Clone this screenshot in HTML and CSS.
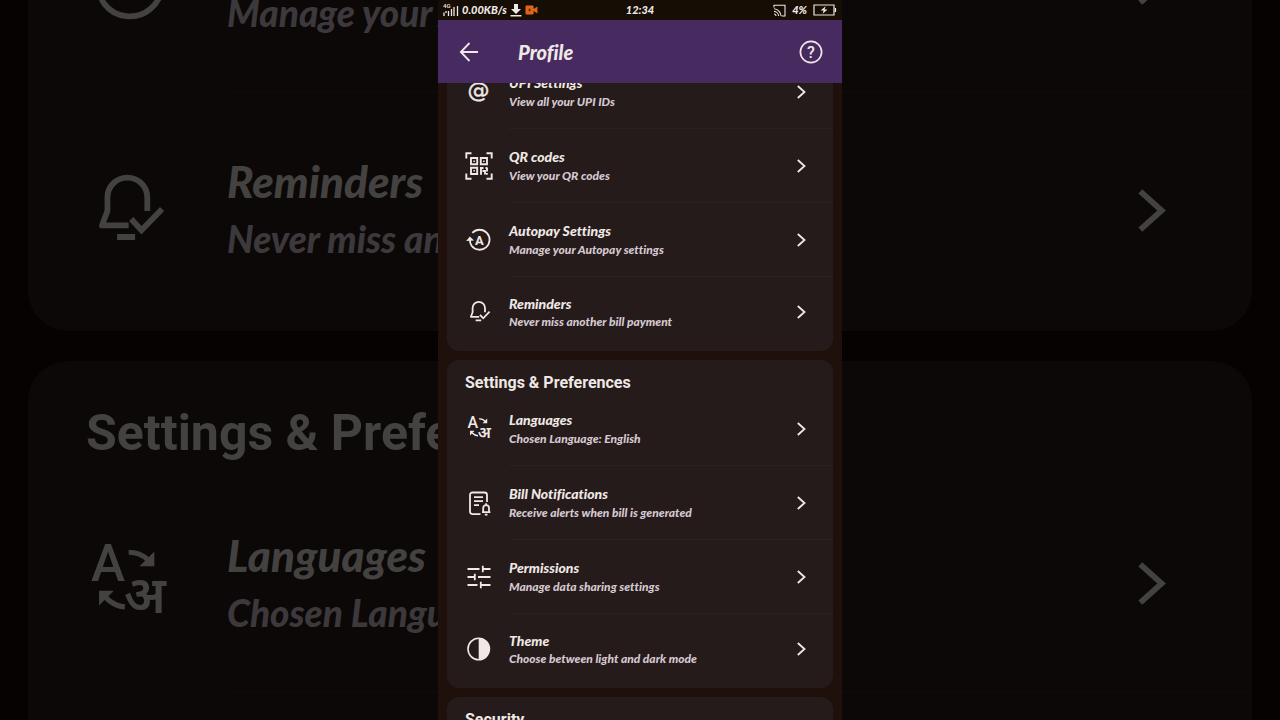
FILE: index.html
```html
<!DOCTYPE html>
<html lang="en">

<head>
    <meta charset="UTF-8">
    <meta name="viewport" content="width=device-width, initial-scale=1.0">
    <title>Profile</title>
    <link rel="stylesheet" href="styles.css">
</head>

<body>
    <!-- Icon set -->
    <svg class="icon-set" aria-hidden="true">
        <symbol id="icon-chevron" viewBox="0 0 16 16">
            <path d="M4.8 2 L11.5 8 L4.8 14" fill="none" stroke="currentColor" stroke-width="1.8" />
        </symbol>
        <symbol id="icon-at" viewBox="0 0 28 28">
            <text x="13.5" y="20" class="glyph glyph-at">@</text>
        </symbol>
        <symbol id="icon-qr" viewBox="0 0 28 28">
            <g fill="none" stroke="currentColor" stroke-width="1.9">
                <path d="M1.3 6.5V1.3H6.5M21.5 1.3H26.7V6.5M26.7 21.5V26.7H21.5M6.5 26.7H1.3V21.5" />
                <path d="M6 6H12.2V12.2H6ZM15.8 6H22V12.2H15.8ZM6 15.8H12.2V22H6Z" />
                <path d="M15 16H18.5M16 15.2V22.8M17.5 19H20V22.5M20.5 16H22.5M22 16V19.5" />
            </g>
            <path d="M8.4 8.4H9.9V9.9H8.4ZM18.1 8.4H19.6V9.9H18.1ZM8.4 18.1H9.9V19.6H8.4ZM21 21H22.8V22.8H21Z" fill="currentColor" />
        </symbol>
        <symbol id="icon-autopay" viewBox="0 0 28 28">
            <path d="M7.3 6.9A10 10 0 1 1 6.6 19.8Q4.9 17.4 4.8 13" fill="none" stroke="currentColor" stroke-width="1.8" />
            <path d="M1.2 15L4.8 10.4L9 14.6Z" fill="currentColor" />
            <text x="14.4" y="18.8" class="glyph glyph-auto">A</text>
        </symbol>
        <symbol id="icon-reminder" viewBox="0 0 28 28">
            <g fill="none" stroke="currentColor" stroke-width="1.8">
                <path d="M14.2 18.8H5.9L7.6 14.3V10.1A6 6 0 0 1 20 10.1V14.3" stroke-linejoin="round" />
                <path d="M15 16.8L18.2 20.3L24.6 13.7M10.6 22.4H16.2" />
            </g>
        </symbol>
        <symbol id="icon-language" viewBox="0 0 28 28">
            <text x="7.8" y="12.6" class="glyph glyph-latin">A</text>
            <text x="19.2" y="22.8" class="glyph glyph-hindi">अ</text>
            <path d="M14.2 3.8Q17.8 3.8 20.2 6.2M13 20.8Q9.8 20.6 7.2 18" fill="none" stroke="currentColor" stroke-width="1.6" />
            <path d="M22.2 3.6V8.2H17.6ZM5 20.4V15.8H9.6Z" fill="currentColor" />
        </symbol>
        <symbol id="icon-bill" viewBox="0 0 28 28">
            <g fill="none" stroke="currentColor" stroke-width="1.8">
                <path d="M15.5 25.2H7.5A2.5 2.5 0 0 1 5 22.7V6A2.5 2.5 0 0 1 7.5 3.5H19.5A2.5 2.5 0 0 1 22 6V13" />
                <path d="M9 8.2H18M9 12.2H18M9 16.2H14" />
                <path d="M17 23.2H25.4M18.2 23V19A2.9 2.9 0 0 1 24 19V23M21.1 16V14.3M19.8 25.6H22.5" />
            </g>
        </symbol>
        <symbol id="icon-sliders" viewBox="0 0 28 28">
            <path d="M2.5 6H14.5M17.5 6H25.5M17.8 2.8V9.2M2.5 14H10M13 14H25.5M9.8 10.8V17.2M2.5 22H12.5M15.5 22H25.5M15.8 18.8V25.2" fill="none" stroke="currentColor" stroke-width="1.8" />
        </symbol>
        <symbol id="icon-theme" viewBox="0 0 28 28">
            <circle cx="13.7" cy="14" r="10.7" fill="none" stroke="currentColor" stroke-width="1.6" />
            <path d="M13.7 3.3A10.7 10.7 0 0 1 13.7 24.7Z" fill="currentColor" />
        </symbol>
    </svg>

    <!-- Enlarged dim copy behind the phone -->
    <div class="backdrop" aria-hidden="true">
        <div class="card">
            <div class="row">
                <svg class="row-icon"><use href="#icon-autopay" /></svg>
                <div class="row-body">
                    <div class="row-text">
                        <span class="row-title">Autopay Settings</span>
                        <span class="row-sub">Manage your Autopay settings</span>
                    </div>
                    <svg class="chevron"><use href="#icon-chevron" /></svg>
                </div>
            </div>
            <div class="row">
                <svg class="row-icon"><use href="#icon-reminder" /></svg>
                <div class="row-body">
                    <div class="row-text">
                        <span class="row-title">Reminders</span>
                        <span class="row-sub">Never miss another bill payment</span>
                    </div>
                    <svg class="chevron"><use href="#icon-chevron" /></svg>
                </div>
            </div>
        </div>
        <div class="card">
            <div class="card-title">Settings &amp; Preferences</div>
            <div class="row">
                <svg class="row-icon"><use href="#icon-language" /></svg>
                <div class="row-body">
                    <div class="row-text">
                        <span class="row-title">Languages</span>
                        <span class="row-sub">Chosen Language: English</span>
                    </div>
                    <svg class="chevron"><use href="#icon-chevron" /></svg>
                </div>
            </div>
            <div class="row"></div>
        </div>
    </div>

    <div class="phone">
        <div class="status-bar">
            <div class="status-left">
                <svg class="signal" viewBox="0 0 16 14">
                    <text x="0" y="5" class="glyph-net">4G</text>
                    <path d="M1 9.5V13M3 8V10M5.5 8V13M8.5 6V13M11 4V13M14.5 3V13" fill="none" stroke="currentColor" stroke-width="1.3" />
                </svg>
                <span>0.00KB/s</span>
                <svg class="download" viewBox="0 0 12 14">
                    <path d="M4 1H8V6H11L6 11L1 6H4ZM.5 12H11.5V13.4H.5Z" fill="currentColor" />
                </svg>
                <svg class="camera" viewBox="0 0 13 10">
                    <path d="M1.5 .5H7.5Q8.6 .5 8.6 1.5V4L12.4 1.5V8.5L8.6 6V8.5Q8.6 9.5 7.5 9.5H1.5Q.5 9.5 .5 8.5V1.5Q.5 .5 1.5 .5Z" fill="#e0661c" />
                    <path d="M3 5H6.2M4.6 3.4V6.6" stroke="#6b2c08" stroke-width="1" />
                </svg>
            </div>
            <span>12:34</span>
            <div class="status-right">
                <svg class="cast" viewBox="0 0 13 13">
                    <path d="M1 3.5V1.2H12V12H8.6M1 4.8A7.4 7.4 0 0 1 8 12M1 7.4A4.8 4.8 0 0 1 5.6 12M1 10A2 2 0 0 1 3 12" fill="none" stroke="currentColor" stroke-width="1.1" />
                </svg>
                <span>4%</span>
                <svg class="battery" viewBox="0 0 24 12">
                    <path d="M1 1H21V11H1ZM22.5 4V8" fill="none" stroke="currentColor" stroke-width="1.2" />
                    <path d="M12.6 2.2L7.6 6.6H10.6L9.6 9.8L14.6 5.4H11.6Z" fill="currentColor" />
                </svg>
            </div>
        </div>

        <header class="app-bar">
            <button class="icon-button" type="button" aria-label="Back">
                <svg viewBox="0 0 24 24"><path d="M21 12H4M12.5 3L3.8 12L12.5 21" fill="none" stroke="currentColor" stroke-width="1.8" /></svg>
            </button>
            <h1>Profile</h1>
            <button class="icon-button" type="button" aria-label="Help">
                <svg viewBox="0 0 24 24">
                    <circle cx="12" cy="12" r="10.6" fill="none" stroke="currentColor" stroke-width="1.7" />
                    <text x="12" y="17.8" class="glyph glyph-help">?</text>
                </svg>
            </button>
        </header>

        <main class="content">
            <section class="card">
                <a class="row" href="#">
                    <svg class="row-icon"><use href="#icon-at" /></svg>
                    <div class="row-body">
                        <div class="row-text">
                            <span class="row-title">UPI Settings</span>
                            <span class="row-sub">View all your UPI IDs</span>
                        </div>
                        <svg class="chevron"><use href="#icon-chevron" /></svg>
                    </div>
                </a>
                <a class="row" href="#">
                    <svg class="row-icon"><use href="#icon-qr" /></svg>
                    <div class="row-body">
                        <div class="row-text">
                            <span class="row-title">QR codes</span>
                            <span class="row-sub">View your QR codes</span>
                        </div>
                        <svg class="chevron"><use href="#icon-chevron" /></svg>
                    </div>
                </a>
                <a class="row" href="#">
                    <svg class="row-icon"><use href="#icon-autopay" /></svg>
                    <div class="row-body">
                        <div class="row-text">
                            <span class="row-title">Autopay Settings</span>
                            <span class="row-sub">Manage your Autopay settings</span>
                        </div>
                        <svg class="chevron"><use href="#icon-chevron" /></svg>
                    </div>
                </a>
                <a class="row" href="#">
                    <svg class="row-icon"><use href="#icon-reminder" /></svg>
                    <div class="row-body">
                        <div class="row-text">
                            <span class="row-title">Reminders</span>
                            <span class="row-sub">Never miss another bill payment</span>
                        </div>
                        <svg class="chevron"><use href="#icon-chevron" /></svg>
                    </div>
                </a>
            </section>

            <section class="card">
                <h2 class="card-title">Settings &amp; Preferences</h2>
                <a class="row" href="#">
                    <svg class="row-icon"><use href="#icon-language" /></svg>
                    <div class="row-body">
                        <div class="row-text">
                            <span class="row-title">Languages</span>
                            <span class="row-sub">Chosen Language: English</span>
                        </div>
                        <svg class="chevron"><use href="#icon-chevron" /></svg>
                    </div>
                </a>
                <a class="row" href="#">
                    <svg class="row-icon"><use href="#icon-bill" /></svg>
                    <div class="row-body">
                        <div class="row-text">
                            <span class="row-title">Bill Notifications</span>
                            <span class="row-sub">Receive alerts when bill is generated</span>
                        </div>
                        <svg class="chevron"><use href="#icon-chevron" /></svg>
                    </div>
                </a>
                <a class="row" href="#">
                    <svg class="row-icon"><use href="#icon-sliders" /></svg>
                    <div class="row-body">
                        <div class="row-text">
                            <span class="row-title">Permissions</span>
                            <span class="row-sub">Manage data sharing settings</span>
                        </div>
                        <svg class="chevron"><use href="#icon-chevron" /></svg>
                    </div>
                </a>
                <a class="row" href="#">
                    <svg class="row-icon"><use href="#icon-theme" /></svg>
                    <div class="row-body">
                        <div class="row-text">
                            <span class="row-title">Theme</span>
                            <span class="row-sub">Choose between light and dark mode</span>
                        </div>
                        <svg class="chevron"><use href="#icon-chevron" /></svg>
                    </div>
                </a>
            </section>

            <section class="card">
                <h2 class="card-title">Security</h2>
            </section>
        </main>
    </div>
</body>

</html>
```

FILE: styles.css
```css
* {
    box-sizing: border-box;
}

body {
    margin: 0;
    height: 100vh;
    overflow: hidden;
    background-color: #060201;
    color: #efe8e5;
    font-family: Lato, "Liberation Sans", sans-serif;
    font-weight: 900;
    font-style: italic;
    font-variant-ligatures: none;
}

svg {
    display: block;
    flex: none;
}

.icon-set {
    display: none;
}

/* Letters used inside icons */
.glyph {
    fill: currentColor;
    font-family: Roboto, "Noto Sans", sans-serif;
    font-style: normal;
    text-anchor: middle;
}

.glyph-at {
    font-family: "DejaVu Sans", sans-serif;
    font-size: 22px;
    font-weight: 400;
    stroke: currentColor;
    stroke-width: 0.4px;
}

.glyph-auto {
    font-size: 13px;
    font-weight: 700;
}

.glyph-latin {
    font-size: 16px;
    font-weight: 500;
}

.glyph-hindi {
    font-family: "Noto Sans", "Noto Sans Devanagari", sans-serif;
    font-size: 16px;
    font-weight: 600;
}

.glyph-help {
    font-size: 16px;
    font-weight: 500;
}

.glyph-net {
    fill: currentColor;
    font-family: Roboto, sans-serif;
    font-size: 6px;
    font-style: normal;
    font-weight: 500;
}

/* Phone */
.phone {
    position: relative;
    width: 404px;
    max-width: 100%;
    height: 100%;
    margin: 0 auto;
    overflow: hidden;
    background-color: #1f100b;
}

.status-bar {
    position: relative;
    z-index: 1;
    display: grid;
    grid-template-columns: 1fr auto 1fr;
    align-items: center;
    height: 20px;
    padding: 0 5px;
    background-color: #160d04;
    font-size: 11px;
    line-height: 18px;
}

.status-left,
.status-right {
    display: flex;
    align-items: center;
    gap: 3px;
}

.status-right {
    justify-content: flex-end;
    gap: 6px;
}

.signal {
    width: 16px;
    height: 14px;
}

.download {
    width: 12px;
    height: 14px;
}

.camera {
    width: 13px;
    height: 10px;
}

.cast {
    width: 13px;
    height: 13px;
}

.battery {
    width: 24px;
    height: 12px;
}

.app-bar {
    position: relative;
    z-index: 1;
    display: flex;
    align-items: center;
    height: 63px;
    padding: 0 19px;
    background-color: #472a60;
}

.app-bar h1 {
    flex: 1;
    margin: 0 0 0 37px;
    font-size: 20px;
    font-weight: 900;
    line-height: 24px;
}

.icon-button {
    width: 24px;
    height: 24px;
    padding: 0;
    border: none;
    background: none;
    color: inherit;
    cursor: pointer;
}

/* The list is scrolled a little under the app bar */
.content {
    display: flex;
    flex-direction: column;
    gap: 9px;
    margin-top: -28px;
    padding: 0 9px;
}

.card {
    padding-bottom: 4px;
    border-radius: 12px;
    background-color: #241b1a;
}

.card-title {
    margin: 0;
    padding: 14px 18px 0;
    font-family: Roboto, sans-serif;
    font-size: 16px;
    font-style: normal;
    font-weight: 700;
    line-height: 18px;
}

.row {
    display: flex;
    align-items: center;
    gap: 16px;
    height: 74px;
    padding-left: 18px;
    color: inherit;
    text-decoration: none;
}

.row:last-child {
    height: 70px;
}

.row-icon {
    width: 28px;
    height: 28px;
}

.row-body {
    display: flex;
    flex: 1;
    align-items: center;
    justify-content: space-between;
    height: 100%;
    padding-right: 24px;
    border-bottom: 1px solid #2a2120;
}

.row:last-child .row-body {
    border-bottom: none;
}

.row-text {
    display: flex;
    flex-direction: column;
    padding-top: 1px;
    line-height: 19px;
    white-space: nowrap;
}

.row:last-child .row-text {
    line-height: 18px;
}

.row-title {
    font-size: 14px;
}

.row-sub {
    color: #d6c8d0;
    font-size: 12px;
}

.chevron {
    width: 16px;
    height: 16px;
}

/* Backdrop */
.backdrop {
    position: absolute;
    inset: 0;
    display: flex;
    flex-direction: column;
    gap: 30px;
    margin-top: -124px;
    padding: 0 28px;
    overflow: hidden;
    color: #444241;
}

.backdrop .card {
    flex: none;
    border-radius: 40px;
    background-color: #0b0807;
}

.backdrop .card-title {
    padding: 43px 58px 14px;
    font-size: 50px;
    line-height: 58px;
}

.backdrop .row {
    gap: 54px;
    height: 217px;
    padding-left: 55px;
}

.backdrop .row:last-child {
    height: 234px;
}

.backdrop .row-icon {
    width: 90px;
    height: 90px;
}

.backdrop .row-body {
    padding-right: 76px;
    border-bottom: 2px solid #0d0a0a;
}

.backdrop .row-text,
.backdrop .row:last-child .row-text {
    padding-top: 0;
    line-height: 58px;
}

.backdrop .row-title {
    font-size: 44px;
}

.backdrop .row-sub {
    color: #3c383b;
    font-size: 37px;
}

.backdrop .chevron {
    width: 51px;
    height: 51px;
}
```
